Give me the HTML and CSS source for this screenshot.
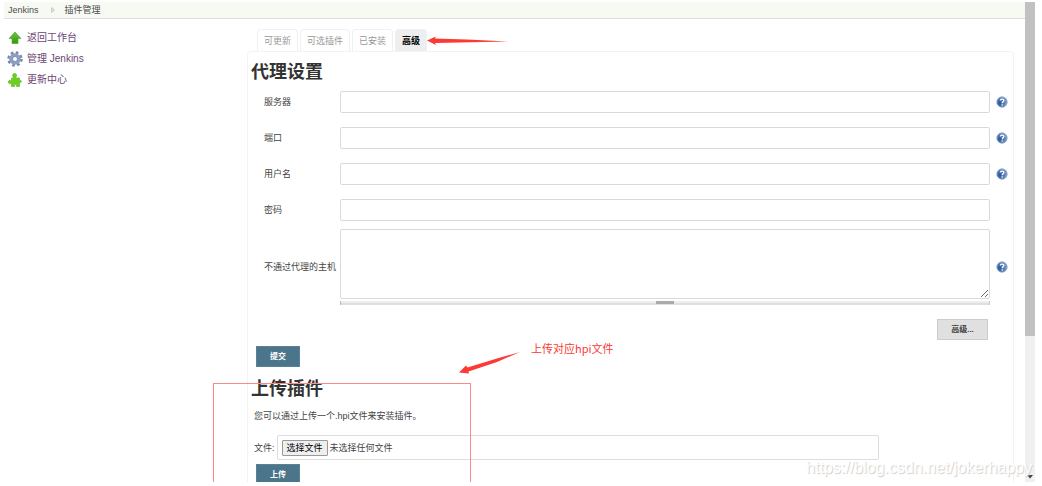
FILE: index.html
```html
<!DOCTYPE html>
<html lang="zh-CN">
<head>
<meta charset="utf-8">
<title>插件管理 [Jenkins]</title>
<link rel="stylesheet" href="styles.css">
</head>
<body>
<svg class="defs" width="0" height="0" aria-hidden="true">
  <defs>
    <radialGradient id="helpFill" cx="30%" cy="60%" r="75%"><stop offset="0" stop-color="#24549c"/><stop offset="1" stop-color="#8aa5cb"/></radialGradient>
    <linearGradient id="greenFill" x1="0" y1="0" x2="0" y2="1"><stop offset="0" stop-color="#6cc644"/><stop offset="1" stop-color="#38940f"/></linearGradient>
    <symbol id="help" viewBox="0 0 12 12">
      <circle cx="6" cy="6" r="5.2" fill="url(#helpFill)" stroke="#8ba3c7" stroke-width=".8"/>
      <path d="M4.4 4.5C4.5 2.7 7.9 2.7 7.8 4.5C7.8 5.7 6.2 5.6 6.2 7.2M6.2 8.2V9.4" fill="none" stroke="#fff" stroke-width="1.3"/>
    </symbol>
  </defs>
</svg>
<div class="window">
  <div class="page">
    <nav class="breadcrumb" aria-label="breadcrumb">
      <a href="#">Jenkins</a>
      <svg width="4" height="6" viewBox="0 0 4 6"><path d="M.5 .5L3.5 3L.5 5.5Z" fill="#ddd" stroke="#bbb" stroke-width=".6"/></svg>
      <a href="#">插件管理</a>
    </nav>
    <div class="columns">
      <nav class="side">
        <a href="#">
          <svg width="16" height="16" viewBox="0 0 16 16"><path d="M8 2L14 8.600H11V13.500H5V8.600H2Z" fill="url(#greenFill)" stroke="#58ad2c" stroke-width=".7"/></svg>
          返回工作台
        </a>
        <a href="#">
          <svg width="16" height="16" viewBox="0 0 16 16"><circle cx="8" cy="8" r="6.300" fill="none" stroke="#7487ae" stroke-width="2.800" stroke-dasharray="2.6 2.348"/><circle cx="8" cy="8" r="4.100" fill="none" stroke="#8e9fc2" stroke-width="3.400"/><circle cx="8" cy="8" r="2.500" fill="#fff" stroke="#5c7099" stroke-width=".7"/></svg>
          管理 Jenkins
        </a>
        <a href="#">
          <svg width="16" height="16" viewBox="0 0 16 16"><path d="M4.500 6H6.500C7.600 6 5.200 4.600 5.600 3C6 1 9.400 1 9.600 3C9.800 4.600 8 6 9.200 6H12.500V8.500C12.500 9.500 14 7.800 14.500 9.200C14.800 10.600 12.500 10 12.500 11V14.500H9.800C8.800 14.500 10 12.300 8.600 12.200C7.200 12.200 8.300 14.500 7.300 14.500H4.500V11.500C4.500 10.300 3.600 12 2.400 11.800C1 11.500 1 8.600 2.400 8.300C3.600 8.100 4.500 9.600 4.500 8.500Z" fill="#6fce25" stroke="#55b51a" stroke-width=".6"/></svg>
          更新中心
        </a>
      </nav>
      <main class="main">
        <div class="tabs">
          <a href="#">可更新</a>
          <a href="#">可选插件</a>
          <a href="#">已安装</a>
          <a href="#" class="active" aria-current="page">高级</a>
        </div>
        <div class="panel">
          <h1>代理设置</h1>
          <form class="proxy">
            <div class="row">
              <label for="server">服务器</label>
              <input id="server" type="text">
              <button type="button" class="help" aria-label="帮助"><svg width="12" height="12"><use href="#help"/></svg></button>
            </div>
            <div class="row">
              <label for="port">端口</label>
              <input id="port" type="text">
              <button type="button" class="help" aria-label="帮助"><svg width="12" height="12"><use href="#help"/></svg></button>
            </div>
            <div class="row">
              <label for="user">用户名</label>
              <input id="user" type="text">
              <button type="button" class="help" aria-label="帮助"><svg width="12" height="12"><use href="#help"/></svg></button>
            </div>
            <div class="row">
              <label for="pass">密码</label>
              <input id="pass" type="password">
            </div>
            <div class="row hosts">
              <label for="hosts">不通过代理的主机</label>
              <div class="area">
                <textarea id="hosts"></textarea>
                <div class="handle"><span></span></div>
              </div>
              <button type="button" class="help" aria-label="帮助"><svg width="12" height="12"><use href="#help"/></svg></button>
            </div>
            <div class="more"><button type="button" class="plain">高级...</button></div>
            <button type="submit" class="primary">提交</button>
          </form>
          <h1>上传插件</h1>
          <form class="upload">
            <p>您可以通过上传一个.hpi文件来安装插件。</p>
            <div class="file-row">
              <span>文件:</span>
              <div class="file-box">
                <input id="file" type="file" class="file-input">
                <label for="file">选择文件</label>
                <span>未选择任何文件</span>
              </div>
            </div>
            <button type="submit" class="primary">上传</button>
          </form>
        </div>
      </main>
    </div>
  </div>
  <div class="scrollbar" aria-hidden="true">
    <div class="thumb"></div>
    <svg width="6" height="4" viewBox="0 0 6 4"><path d="M0 0H6L3 3.500Z" fill="#444"/></svg>
  </div>
  <svg class="note arrow-tab" width="82" height="10" viewBox="0 0 82 10"><path d="M0 4.500L9 .5L8 2.500L40 3.500L81 5.500L8 7L9 9Z" fill="#fb3a34"/></svg>
  <svg class="note arrow-upload" width="62" height="22" viewBox="0 0 62 22"><path d="M0 20.500L7 13.500L8.500 15.500L38 6.500L61 0L38 10L9.500 19.500L10 21.500Z" fill="#fb3a34"/></svg>
  <div class="note note-text">上传对应hpi文件</div>
  <div class="note note-box"></div>
  <div class="note watermark">https://blog.csdn.net/jokerhappy</div>
</div>
</body>
</html>
```
FILE: styles.css
```css
* { box-sizing: border-box; }
body {
  margin: 0;
  padding: 2px 7px 4px 4px;
  background: #fff;
  color: #444;
  font: 9px/12px "Liberation Sans", "Noto Sans CJK SC", sans-serif;
}
button, input, textarea { font: inherit; }
a { text-decoration: none; }
.defs { position: absolute; }
.window {
  position: relative;
  display: flex;
  height: calc(100vh - 6px);
}
.page { flex: 1; min-width: 0; overflow: hidden; }
.breadcrumb {
  display: flex;
  align-items: center;
  height: 17px;
  padding-left: 4px;
  background: #f6faf2;
  border-bottom: 1px solid #dcdfdc;
}
.breadcrumb a { color: #4d4d4d; }
.breadcrumb svg { margin: 0 10px 0 12px; }
.columns { display: flex; }
.side {
  display: flex;
  flex-direction: column;
  gap: 5px;
  flex: 0 0 243px;
  padding: 11px 0 0 3px;
}
.side a {
  display: flex;
  align-items: center;
  gap: 4px;
  height: 16px;
  color: #6a4574;
  font-size: 10px;
}
.main { flex: 1; min-width: 0; padding: 10px 11px 0 0; }
.tabs { display: flex; gap: 2px; padding-left: 10px; }
.tabs a {
  height: 22px;
  padding: 5px 6px 0;
  border: 1px solid #f0f0f0;
  border-bottom: 0;
  border-radius: 4px 4px 0 0;
  color: #999;
}
.tabs .active { background: #eee; color: #000; font-weight: bold; }
.panel {
  padding: 8px 4px 0 3px;
  border: 1px solid #f3f3f3;
  border-radius: 4px;
}
h1 { margin: 0; color: #333; font-size: 18px; line-height: 24px; }
.proxy { padding: 7px 0 10px; }
.row {
  display: grid;
  grid-template-columns: 76px 1fr 12px;
  align-items: center;
  margin-bottom: 14px;
  padding: 0 1px 0 13px;
}
.row label { white-space: nowrap; }
.row input, textarea {
  display: block;
  width: 100%;
  border: 1px solid #d9d9d9;
  border-radius: 2px;
  background: #fff;
}
.row input { height: 22px; padding: 2px 4px; }
.row > input, .area { width: auto; margin-right: 6px; }
.help {
  display: block;
  padding: 0;
  border: 0;
  background: none;
  height: 12px;
}
.help svg { display: block; }
.hosts { margin: -6px 0 14px; }
textarea { height: 70px; padding: 4px; resize: vertical; }
.handle {
  display: flex;
  justify-content: center;
  height: 4px;
  margin-top: 2px;
  border-left: 1px solid #bbb;
  border-right: 1px solid #ccc;
  background: linear-gradient(#eee 50%, #dfdfdf 50%);
}
.handle span { width: 18px; height: 3px; background: #aaa; }
.more { display: flex; justify-content: flex-end; padding-right: 21px; }
.plain, .primary {
  display: block;
  height: 21px;
  padding: 0;
  border: 1px solid #ccc;
  background: #e0e0e0;
  color: #444;
  font-size: 8px;
  font-weight: bold;
}
.plain { width: 51px; }
.primary {
  width: 44px;
  margin: 6px 0 0 5px;
  border-color: #5b8197;
  background: #4b758b;
  color: #fff;
}
.upload { padding-left: 3px; }
.upload p { margin: 9px 0 13px; }
.file-row { display: flex; align-items: center; gap: 2px; padding-right: 130px; }
.file-box {
  display: flex;
  flex: 1;
  align-items: center;
  gap: 2px;
  height: 25px;
  padding-left: 4px;
  border: 1px solid #ddd;
  border-radius: 2px;
}
.file-input { position: absolute; width: 1px; height: 1px; opacity: 0; }
.file-box label {
  height: 16px;
  padding: 1px 4px;
  border: 1px solid #999;
  border-radius: 1px;
  background: #efefef;
  color: #000;
}
.upload .primary { margin: 4px 0 0 2px; }
.scrollbar {
  display: flex;
  flex-direction: column;
  align-items: center;
  justify-content: space-between;
  flex: 0 0 10px;
  padding-bottom: 3px;
  background: #f0f0f0;
}
.thumb { width: 10px; height: 70%; background: #c1c1c1; }
.note { position: absolute; pointer-events: none; }
.arrow-tab { left: 423px; top: 34px; }
.arrow-upload { left: 455px; top: 350px; }
.note-text {
  left: 527px;
  top: 338px;
  color: #fb3a34;
  font: 11px/16px "Noto Sans CJK SC", sans-serif;
}
.note-box {
  left: 209px;
  top: 381px;
  bottom: 0;
  width: 258px;
  border: 1px solid #fb8a86;
  border-bottom: 0;
}
.watermark {
  right: 3px;
  bottom: 4px;
  color: #fff;
  font-size: 16px;
  line-height: 20px;
  text-shadow: 1px 1px 1px #ccc;
}
```
